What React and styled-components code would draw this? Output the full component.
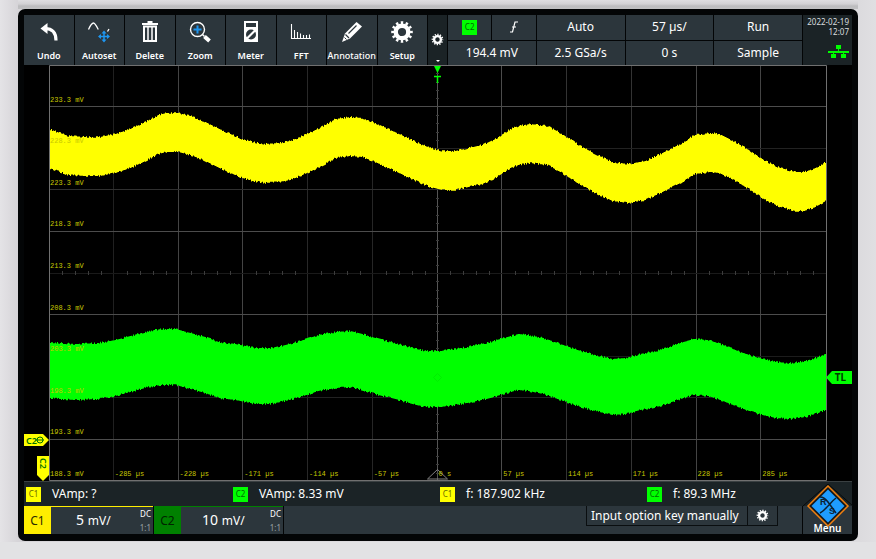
import React from "react";
import styled, { createGlobalStyle, css } from "styled-components";

const C = {
  panel: "#2c363c",
  dark: "#1b2326",
  yellow: "#ffff00",
  green: "#00ff00",
  blue: "#1e96f0",
};

const GlobalStyle = createGlobalStyle`
  *, *::before, *::after { box-sizing: border-box; }
  html, body, #root { height: 100%; }
  body {
    margin: 0;
    background: #dddcdf;
    color: #fff;
    font-family: "Noto Sans", "Open Sans", sans-serif;
    font-size: 12px;
  }
  button { font: inherit; color: inherit; border: 0; padding: 0; margin: 0; cursor: pointer; }
`;

const Bezel = styled.main`
  display: flex;
  min-height: 100vh;
  padding: 9px 18px 18px;
  background:
    linear-gradient(to bottom, #dedde0 0, #d2d1d4 4px, #bcbcbe 6px, #c0c0c2 9px) 18px 0 / calc(100% - 36px) 9px no-repeat,
    linear-gradient(#e2e2e4, #e2e2e4) 0 100% / 100% 17px no-repeat,
    linear-gradient(to right, #e4e3e6 0, #d6d4d8 18px, #dddcdf 50%, #dcdbde calc(100% - 16px), #e0dfe2 100%);
`;

const Screen = styled.div`
  flex: 1;
  min-width: 0;
  display: flex;
  flex-direction: column;
  padding: 6px 6px 7px;
  background: #030506;
  border-radius: 7px;
`;

const Header = styled.header`
  display: grid;
  grid-template-columns: minmax(0, 403fr) minmax(0, 19fr) minmax(0, 354fr) minmax(0, 49fr);
  gap: 1px;
  height: 50px;
`;

const Toolbar = styled.nav`
  display: flex;
  gap: 1px;
`;

const ToolButton = styled.button`
  flex: 1 1 0;
  min-width: 0;
  display: flex;
  flex-direction: column;
  align-items: center;
  justify-content: space-between;
  padding: 5px 0 3px;
  background: ${C.panel};
  font-size: 9px;
  font-weight: ${(p) => (p.$long ? 500 : 600)};
  line-height: 12px;
`;

const ToolIcon = styled.svg`
  width: 24px;
  height: 24px;
  fill: none;
  stroke: #fff;
`;

const MoreButton = styled.button`
  display: flex;
  flex-direction: column;
  align-items: center;
  justify-content: flex-end;
  gap: 14px;
  padding-bottom: 3px;
  background: ${C.dark};
`;

const Caret = styled.span`
  border: 2px solid transparent;
  border-top-color: #fff;
  border-bottom: 0;
`;

const InfoGrid = styled.div`
  display: grid;
  grid-template-columns: repeat(8, minmax(0, 1fr));
  grid-template-rows: 1fr 1fr;
  gap: 1px;
`;

const InfoCell = styled.button`
  grid-column: span ${(p) => p.$span || 2};
  min-width: 0;
  display: flex;
  align-items: center;
  justify-content: center;
  background: ${C.panel};
  line-height: 16px;
`;

const Clock = styled.div`
  display: flex;
  flex-direction: column;
  align-items: flex-end;
  padding: 2px 3px;
  background: ${C.dark};
  font-size: 8px;
  line-height: 10px;
  color: #d8dcde;
  white-space: nowrap;
  time { display: block; text-align: right; }
`;

const NetIcon = styled.svg`
  width: 21px;
  height: 14px;
  margin-top: 8px;
  fill: ${C.green};
`;

const Badge = styled.span`
  flex: none;
  display: grid;
  place-items: center;
  width: 15px;
  height: 15px;
  background: ${(p) => (p.$ch === 1 ? C.yellow : C.green)};
  color: ${(p) => (p.$ch === 1 ? "#6c6c00" : "#006c00")};
  font-size: 8px;
  line-height: 12px;
`;

const PlotRow = styled.section`
  flex: 1;
  min-height: 0;
  display: grid;
  grid-template-columns: 25px 1fr 26px;
  background: #000;
`;

const Gutter = styled.div`
  position: relative;
`;

const ChannelTag = styled.svg`
  position: absolute;
  left: 0;
  bottom: 0;
  width: 25px;
  height: 48px;
  font-family: "Noto Sans", sans-serif;
  font-weight: 600;
`;

const TriggerTag = styled.div`
  position: absolute;
  top: 75%;
  left: 0;
  width: 26px;
  height: 13px;
  margin-top: -6px;
  padding-left: 3px;
  background: ${C.green};
  color: #003c00;
  clip-path: polygon(0 50%, 6px 0, 100% 0, 100% 100%, 6px 100%);
  font-size: 10px;
  font-weight: 700;
  line-height: 13px;
  text-align: center;
`;

const Plot = styled.div`
  position: relative;
  min-width: 0;
`;

const PlotSvg = styled.svg`
  position: absolute;
  inset: 0;
  width: 100%;
  height: 100%;
  overflow: visible;
`;

const axisText = css`
  color: #c8c800;
  font: 7px/8px "Liberation Mono", monospace;
  white-space: pre;
`;

const VoltAxis = styled.div`
  position: absolute;
  inset: 0 auto 0 1px;
  display: grid;
  grid-template-rows: repeat(10, 1fr);
  align-items: end;
  ${axisText}
  span { padding-bottom: 3px; }
`;

const TimeAxis = styled.div`
  position: absolute;
  inset: auto 0 3px 0;
  display: grid;
  grid-template-columns: repeat(12, minmax(0, 1fr));
  ${axisText}
  span { padding-left: 1px; }
`;

const Measurements = styled.section`
  display: grid;
  grid-template-columns: repeat(4, 1fr);
  height: 25px;
  background: ${C.dark};
  border-top: 1px solid #3a4042;
`;

const Measurement = styled.div`
  display: flex;
  align-items: center;
  gap: 11px;
  padding-left: 2px;
  line-height: 16px;
`;

const Footer = styled.footer`
  display: grid;
  grid-template-columns: minmax(0, 129fr) minmax(0, 129fr) minmax(0, 518fr) minmax(0, 49fr);
  gap: 1px;
  height: 28px;
`;

const Channel = styled.button`
  display: grid;
  grid-template-columns: 27px 1fr auto;
  background: ${C.panel};
  border-top: 1px solid ${(p) => (p.$ch === 1 ? "#ffee00" : "#008000")};
`;

const ChannelName = styled.span`
  display: grid;
  place-items: center;
  height: 27px;
  background: ${(p) => (p.$ch === 1 ? "#ffee00" : "#008000")};
  color: ${(p) => (p.$ch === 1 ? "#2a2a00" : "#002400")};
  font-size: 12px;
`;

const Scale = styled.span`
  align-self: center;
  padding-right: 4px;
  text-align: center;
  font-size: 14px;
  line-height: 18px;
  small { font-size: 12px; }
`;

const Coupling = styled.span`
  display: flex;
  flex-direction: column;
  justify-content: space-between;
  padding: 1px 2px 0 0;
  height: 27px;
  text-align: right;
  font-size: 8px;
  line-height: 12px;
  i { font-style: normal; color: #9aa2a6; }
`;

const StatusArea = styled.div`
  display: flex;
  justify-content: flex-end;
  align-items: flex-start;
  padding-right: 24px;
  background: ${C.panel};
`;

const OptionButton = styled.button`
  height: 20px;
  min-width: ${(p) => (p.$icon ? "31px" : "161px")};
  display: flex;
  align-items: center;
  justify-content: ${(p) => (p.$icon ? "center" : "flex-start")};
  padding: ${(p) => (p.$icon ? "0 0 1px" : "0 8px 1px 4px")};
  background: ${C.panel};
  border: solid #0a0e10;
  border-width: ${(p) => (p.$icon ? "0 1px 1px 1px" : "0 0 1px 1px")};
  white-space: nowrap;
`;

const MenuButton = styled.button`
  position: relative;
  display: flex;
  align-items: flex-end;
  justify-content: center;
  background: ${C.panel};
  font-size: 10px;
  font-weight: 600;
  line-height: 12px;
  span { position: relative; }
`;

const Logo = styled.svg`
  position: absolute;
  bottom: 7px;
  left: 50%;
  width: 50px;
  height: 43px;
  margin-left: -25px;
  font-family: "Liberation Sans", sans-serif;
  font-weight: 700;
`;

function Gear({ size = 24 }) {
  return (
    <svg width={size} height={size} viewBox="0 0 24 24" fill="none" stroke="#fff">
      <circle cx="12" cy="12" r="6.3" strokeWidth="4.4" />
      <circle cx="12" cy="12" r="9.4" strokeWidth="2.8" pathLength="48" strokeDasharray="2 2" strokeDashoffset="1" />
    </svg>
  );
}

const tools = [
  ["Undo", <ToolIcon viewBox="0 0 24 24" key="i"><path d="M3.5 8.5 10.5 3v11z" fill="#fff" stroke="none" /><path d="M8 8.5c7 0 11 3.5 11 12" strokeWidth="3.2" /></ToolIcon>],
  ["Autoset", <ToolIcon viewBox="0 0 24 24" key="i"><path d="M1.5 9.5C3.5 5 5 3 6.500 3s3 3 4.800 6.500M20.5 11.500 22 9" strokeWidth="1.3" /><path d="M12.5 16.5h9M17 12v9" stroke={C.blue} strokeWidth="1.5" /><path d="m17 10.5 2.5 3h-5zM17 22.5l2.5-3h-5zM11 16.5l3-2.5v5zM23 16.5l-3-2.5v5z" fill={C.blue} stroke="none" /></ToolIcon>],
  ["Delete", <ToolIcon viewBox="0 0 24 24" key="i"><path d="M4 4h16M9.5 2h5" strokeWidth="2" /><path d="M6 6.5h12V21H6z" strokeWidth="2" /><path d="M10 7v13M14 7v13" strokeWidth="1.5" /></ToolIcon>],
  ["Zoom", <ToolIcon viewBox="0 0 24 24" key="i"><circle cx="9.5" cy="9.5" r="7" strokeWidth="1.4" /><path d="M5.5 9.5h8M9.5 5.5v8" stroke={C.blue} strokeWidth="2" /><path d="m14.5 14.5 2 2" strokeWidth="1.5" /><path d="m16.5 16.5 5 4.500" strokeWidth="4" /></ToolIcon>],
  ["Meter", <ToolIcon viewBox="0 0 24 24" key="i"><path d="M5 1h14v21H5z" fill="#fff" stroke="none" /><path d="M7 3h10v4H7z" fill={C.panel} stroke="none" /><circle cx="12" cy="14.5" r="5" fill={C.panel} stroke="none" /><path d="m7 19.500 10-10" strokeWidth="2.2" /></ToolIcon>],
  ["FFT", <ToolIcon viewBox="0 0 24 24" key="i"><path d="M2.5 4v15M5.5 10v9M8.5 12v7M11.5 13.5V19M14.5 15v4M17.500 15v4M20.5 14.5V19M2 18.500h20" strokeWidth="1.1" /></ToolIcon>],
  ["Annotation", <ToolIcon viewBox="0 0 24 24" key="i"><path d="m2 22 3-8.5L16.500 2 22 6.500 10 18.500z" fill="#fff" stroke="none" /><path d="m5.5 14.5 3.5 3.500M8.5 13.500l8-8" stroke={C.panel} strokeWidth="1.2" /><path d="m4.5 17.500 2 2" stroke={C.panel} /></ToolIcon>],
  ["Setup", <Gear key="i" />],
];

const volts = ["233.3", "228.3", "223.3", "218.3", "213.3", "208.3", "203.3", "198.3", "193.3", "188.3"];
const times = ["", "-285 µs", "-228 µs", "-171 µs", "-114 µs", "-57 µs", "0 s", "57 µs", "114 µs", "171 µs", "228 µs", "285 µs"];

const ch1 = [[49,129],[57,132],[68,136],[85,137],[100,137],[115,134],[130,129],[145,122],[158,115],[166,113],[178,113],[190,116],[203,121],[217,128],[230,134],[242,139],[252,142],[265,144],[278,143],[290,141],[309,133],[325,125],[335,119],[350,117],[362,118],[375,123],[388,129],[405,137],[420,144],[430,148],[442,151],[455,151],[468,148],[482,145],[495,139],[510,129],[518,126],[530,124],[547,126],[560,133],[580,146],[595,154],[612,162],[628,164],[645,161],[660,154],[680,144],[694,135],[710,133],[719,134],[735,142],[750,151],[765,161],[780,168],[795,172],[804,172],[815,168],[827,161]];
const ch2 = [[49,342],[60,343],[75,344],[98,343],[115,340],[130,336],[148,331],[161,329],[175,329],[190,333],[205,337],[218,342],[235,344],[255,348],[270,348],[285,345],[300,341],[318,335],[335,332],[350,331],[362,334],[378,339],[395,343],[412,348],[425,351],[440,351],[455,349],[472,346],[490,342],[503,338],[518,334],[528,335],[543,338],[560,344],[580,351],[595,355],[612,359],[625,358],[640,354],[660,350],[680,343],[693,339],[708,340],[720,344],[740,352],[758,358],[775,362],[790,363],[805,361],[818,357],[827,353]];

/* Builds the filled noise band of a trace from its upper envelope. */
function band(points, thickness, seed) {
  let s = seed;
  const rnd = () => {
    s = (s * 16807) % 2147483647;
    return Math.round((s / 2147483647) * 2 - 1) * 0.8;
  };
  let i = 0;
  const top = [];
  const bottom = [];
  for (let x = 49; x < 827; x += 1) {
    while (x > points[i + 1][0]) i += 1;
    const [x0, y0] = points[i];
    const [x1, y1] = points[i + 1];
    const y = y0 + ((y1 - y0) * (x - x0)) / (x1 - x0);
    top.push(`${x} ${(y + rnd()).toFixed(1)}H${x + 1}`);
    bottom.unshift(`${x + 1} ${(y + thickness + rnd()).toFixed(1)}H${x}`);
  }
  return `M${top.join("L")}L${bottom.join("L")}Z`;
}

const vLines = ["#202020", "#444", "#444", "#282828", "#262626", "#555", "#4c4c4c", "#333", "#333", "#444", "#444"];
const hLines = ["#4c4c4c", "#222", "#303030", "#4c4c4c", "#1a1a1a", "#4c4c4c", "#1c1c1c", "#222", "#4c4c4c"];

function Waveforms() {
  const ticks = [];
  for (let k = 1; k < 60; k += 1) {
    if (k % 5) ticks.push(`M${49.5 + Math.round(k * 12.95)} 271v4`);
  }
  for (let k = 1; k < 50; k += 1) {
    if (k % 5) ticks.push(`M436 ${65.5 + Math.round(k * 8.32)}h3`);
  }
  return (
    <PlotSvg viewBox="49 65 777 416" preserveAspectRatio="none" aria-hidden="true">
      {vLines.map((c, i) => (
        <path key={i} d={`M${Math.round(49 + (i + 1) * 64.75) - 0.5} 65V481`} stroke={c} />
      ))}
      {hLines.map((c, i) => (
        <path key={i} d={`M49 ${Math.floor(65 + (i + 1) * 41.6) + 0.5}H826`} stroke={c} />
      ))}
      <path d={ticks.join("")} stroke="#3c3c3c" />
      <path d={band(ch1, 39, 17)} fill={C.yellow} />
      <path d={band(ch2, 56, 91)} fill={C.green} />
      <path d="M49.5 65.5H826.5V480.5H49.5Z" fill="none" stroke="#707070" />
      <path d="M434 66h7l-3.5 7z" fill={C.green} />
      <path d="M434 76.5h7M437.5 76v7" stroke={C.green} strokeWidth="1.5" />
      <path d="m427.5 479 10-9.5 10 9.5z" fill="none" stroke="#808080" />
      <path d="m433.5 377.5 4-4 4 4-4 4z" fill="none" stroke="#00ee00" />
    </PlotSvg>
  );
}

const measurements = [
  [1, "VAmp: ?"],
  [2, "VAmp: 8.33 mV"],
  [1, "f: 187.902 kHz"],
  [2, "f: 89.3 MHz"],
];

export default function App() {
  return (
    <>
      <GlobalStyle />
      <Bezel>
        <Screen>
          <Header>
            <Toolbar>
              {tools.map(([label, icon]) => (
                <ToolButton key={label} $long={label.length > 8}>
                  {icon}
                  {label}
                </ToolButton>
              ))}
            </Toolbar>
            <MoreButton aria-label="Toolbar settings">
              <Gear size={13} />
              <Caret />
            </MoreButton>
            <InfoGrid>
              <InfoCell $span={1} aria-label="Trigger source C2"><Badge $ch={2}>C2</Badge></InfoCell>
              <InfoCell $span={1} aria-label="Rising edge">
                <svg width="10" height="12" viewBox="0 0 10 12" fill="none" stroke="#fff" strokeWidth="1.2">
                  <path d="M1 11h2.5L6 1h3M3 6h4" />
                </svg>
              </InfoCell>
              <InfoCell>Auto</InfoCell>
              <InfoCell>57 µs/</InfoCell>
              <InfoCell>Run</InfoCell>
              <InfoCell>194.4 mV</InfoCell>
              <InfoCell>2.5 GSa/s</InfoCell>
              <InfoCell>0 s</InfoCell>
              <InfoCell>Sample</InfoCell>
            </InfoGrid>
            <Clock>
              <time>2022-02-19</time>
              <time>12:07</time>
              <NetIcon viewBox="0 0 21 14" aria-hidden="true">
                <path d="M8 0h5v4H8zM10 4h1v2h-1zM0 6h21v2H0zM5 8h1v2H5zM15 8h1v2h-1zM3 9h5v4H3zM13 9h5v4h-5z" />
              </NetIcon>
            </Clock>
          </Header>

          <PlotRow>
            <Gutter>
              <ChannelTag viewBox="0 0 25 48">
                <path d="M0 1h19l6 6-6 6H0z" fill={C.yellow} />
                <text x="2" y="11" fontSize="9" fill="#007000">C2</text>
                <circle cx="16" cy="7" r="3" fill="none" stroke="#007000" />
                <path d="M12 7h8" stroke="#007000" />
                <path d="M13 23h12v19l-6 6-6-6z" fill={C.yellow} />
                <text transform="translate(16 25) rotate(90)" fontSize="9" fill="#007000">C2</text>
              </ChannelTag>
            </Gutter>
            <Plot>
              <Waveforms />
              <VoltAxis>{volts.map((v) => <span key={v}>{v} mV</span>)}</VoltAxis>
              <TimeAxis>{times.map((t) => <span key={t}>{t}</span>)}</TimeAxis>
            </Plot>
            <Gutter><TriggerTag>TL</TriggerTag></Gutter>
          </PlotRow>

          <Measurements>
            {measurements.map(([ch, text]) => (
              <Measurement key={text}>
                <Badge $ch={ch}>C{ch}</Badge>
                {text}
              </Measurement>
            ))}
          </Measurements>

          <Footer>
            <Channel $ch={1}>
              <ChannelName $ch={1}>C1</ChannelName>
              <Scale>5 <small>mV/</small></Scale>
              <Coupling>DC<i>1:1</i></Coupling>
            </Channel>
            <Channel $ch={2}>
              <ChannelName $ch={2}>C2</ChannelName>
              <Scale>10 <small>mV/</small></Scale>
              <Coupling>DC<i>1:1</i></Coupling>
            </Channel>
            <StatusArea>
              <OptionButton>Input option key manually</OptionButton>
              <OptionButton $icon aria-label="Option settings"><Gear size={13} /></OptionButton>
            </StatusArea>
            <MenuButton>
              <Logo viewBox="0 0 50 43" aria-hidden="true">
                <path d="M0 22 25 0l25 22" fill={C.dark} stroke="#070a0b" />
                <path d="M25 2 45 22 25 42 5 22z" fill="#15191b" stroke="#f08010" strokeWidth="1.5" />
                <path d="M25 5.5 41.5 22 25 38.5 8.5 22z" fill="#1e9cff" />
                <path d="M17 13c3 0 5 1 8 5s5 7 8 11M33 14c-4 3-6 6-8 8s-4 5-8 7" fill="none" stroke="#0c2030" strokeWidth="1.5" />
                <text x="17" y="21" fontSize="9" fill="#0c2030">R</text>
                <text x="26" y="30" fontSize="9" fill="#0c2030">S</text>
              </Logo>
              <span>Menu</span>
            </MenuButton>
          </Footer>
        </Screen>
      </Bezel>
    </>
  );
}
